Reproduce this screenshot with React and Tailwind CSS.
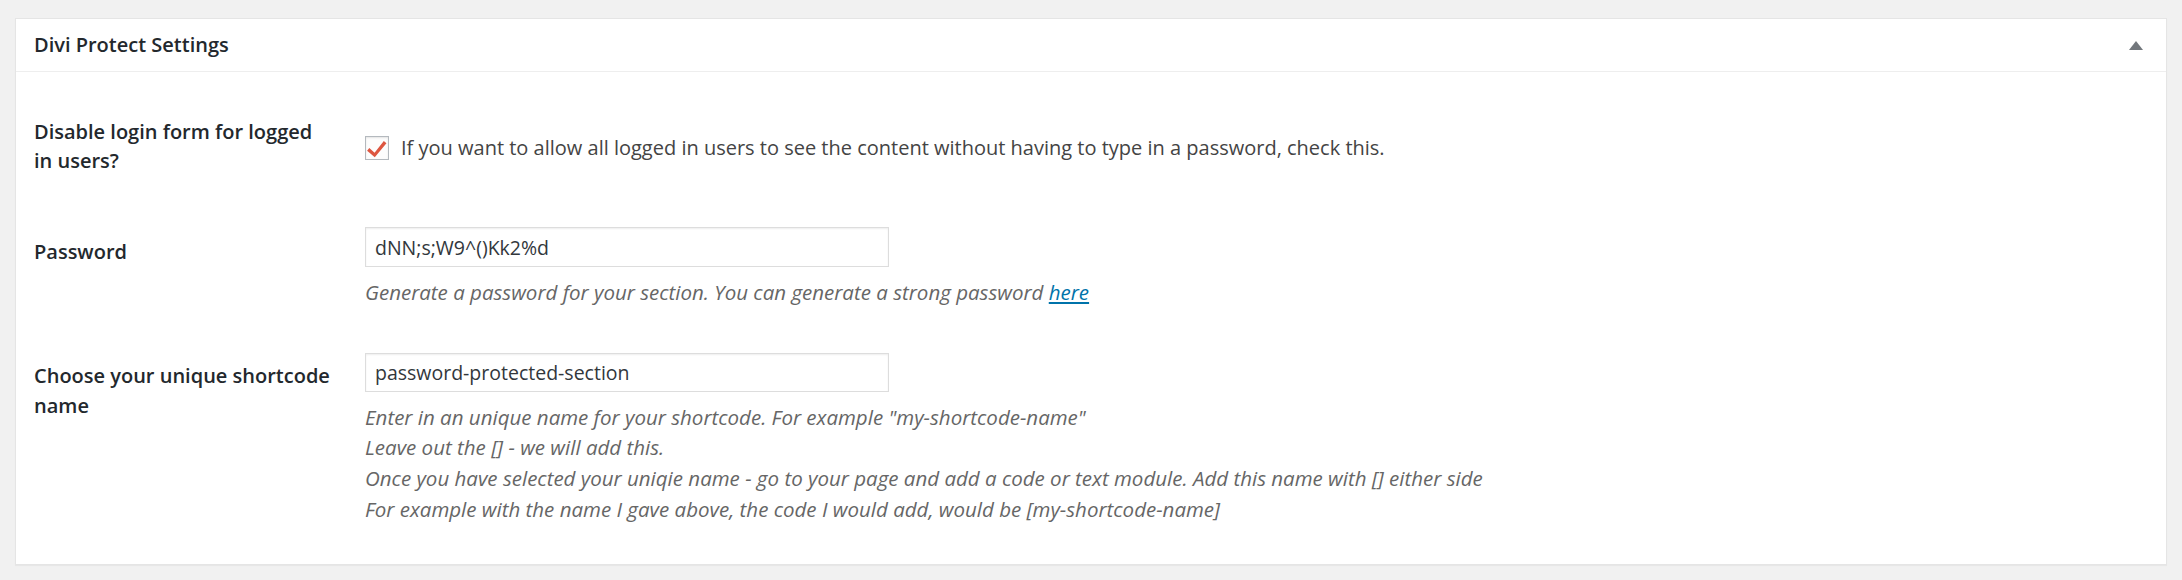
import React from "react";

const font = { fontFamily: '"Open Sans", "Noto Sans", Arial, sans-serif' };

const CheckMark = () => (
  <svg viewBox="0 0 20 20" className="w-[22px] h-[22px]" aria-hidden="true">
    <path d="M3 10 L7.8 14.4 L16.2 3.6 L18.6 5.6 L8 18.4 L1 12.4 Z" fill="#dd5640" />
  </svg>
);

const Label = ({ children, className = "" }) => (
  <div className={`w-[349px] shrink-0 pl-[18px] pr-[20px] text-[20px] leading-[29px] font-semibold text-[#23282d] ${className}`}>
    {children}
  </div>
);

const Desc = ({ children }) => (
  <p className="text-[20.5px] leading-[30.7px] italic text-[#666]">{children}</p>
);

export default function App() {
  return (
    <div className="min-h-screen bg-[#f1f1f1] pt-[18px] px-[15px]" style={font}>
      <div className="bg-white border border-[#e5e5e5] shadow-[0_1px_1px_rgba(0,0,0,0.04)]">
        {/* Header */}
        <div className="h-[53px] border-b-[1.5px] border-[#eeeeee] flex items-center justify-between pl-[18px] pr-[23px]">
          <h2 className="text-[20px] font-semibold text-[#23282d]">Divi Protect Settings</h2>
          <svg viewBox="0 0 14 9" className="w-[14px] h-[9px]" aria-hidden="true">
            <path d="M7 0 L14 9 L0 9 Z" fill="#72777c" />
          </svg>
        </div>

        {/* Body */}
        <div className="pt-[45px] pb-[39px]">
          {/* Row 1 */}
          <div className="flex items-start">
            <Label>
              Disable login form for logged
              <br />
              in users?
            </Label>
            <div className="pt-[16px] flex items-center h-[45px] gap-[12px]">
              <span className="w-[24px] h-[24px] border border-[#b4b9be] bg-[#fdfdfd] shadow-[inset_0_1px_2px_rgba(0,0,0,0.1)] flex items-center justify-center">
                <CheckMark />
              </span>
              <span className="text-[20px] text-[#444] leading-[29px]">
                If you want to allow all logged in users to see the content without having to type in a password, check this.
              </span>
            </div>
          </div>

          {/* Row 2 */}
          <div className="flex items-start mt-[52px]">
            <Label className="pt-[10px]">Password</Label>
            <div className="flex flex-col">
              <input
                type="text"
                defaultValue="dNN;s;W9^()Kk2%d"
                className="w-[524px] h-[40px] border border-[#dddddd] px-[9px] text-[19.5px] text-[#32373c] shadow-[inset_0_1px_2px_rgba(0,0,0,0.07)] outline-none"
                style={font}
              />
              <div className="mt-[10px]">
                <Desc>
                  Generate a password for your section. You can generate a strong password{" "}
                  <a href="#" className="text-[#0073aa] underline">here</a>
                </Desc>
              </div>
            </div>
          </div>

          {/* Row 3 */}
          <div className="flex items-start mt-[45px]">
            <Label className="pt-[8px] leading-[30px]">
              Choose your unique shortcode
              <br />
              name
            </Label>
            <div className="flex flex-col">
              <input
                type="text"
                defaultValue="password-protected-section"
                className="w-[524px] h-[39px] border border-[#dddddd] px-[9px] text-[19.5px] text-[#32373c] shadow-[inset_0_1px_2px_rgba(0,0,0,0.07)] outline-none"
                style={font}
              />
              <div className="mt-[10px]">
                <Desc>Enter in an unique name for your shortcode. For example "my-shortcode-name"</Desc>
                <Desc>Leave out the [] - we will add this.</Desc>
                <Desc>Once you have selected your uniqie name - go to your page and add a code or text module. Add this name with [] either side</Desc>
                <Desc>For example with the name I gave above, the code I would add, would be [my-shortcode-name]</Desc>
              </div>
            </div>
          </div>
        </div>
      </div>
    </div>
  );
}
